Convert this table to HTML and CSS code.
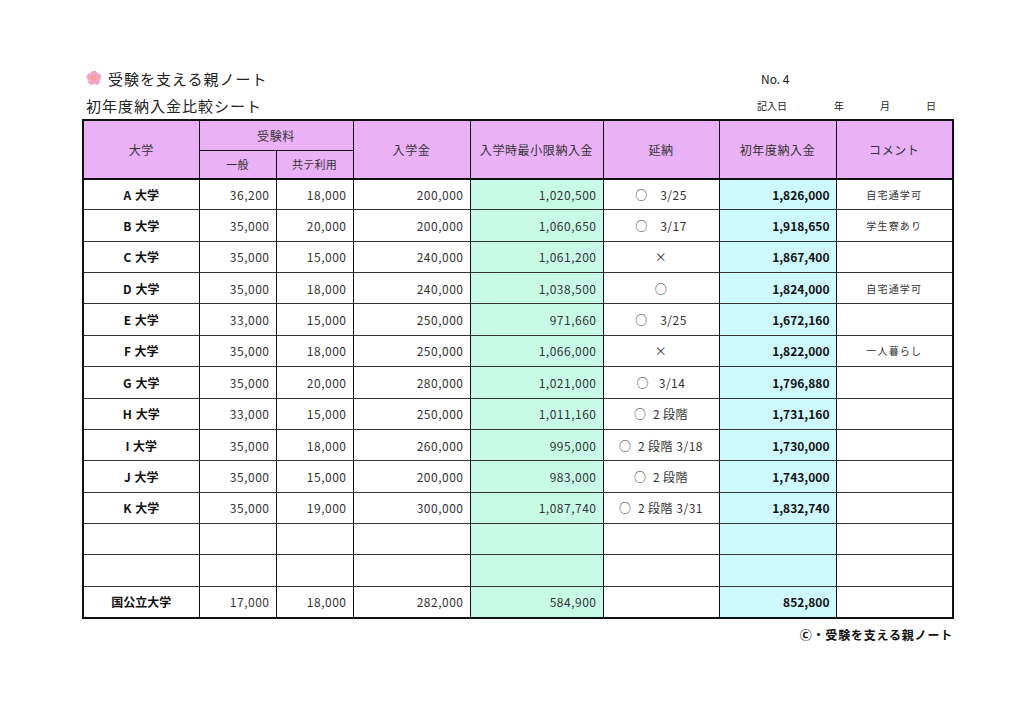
FILE: index.html
```html
<!DOCTYPE html>
<html lang="ja">
<head>
<meta charset="utf-8">
<link rel="stylesheet" href="styles.css">
</head>
<body>
<div class="page">
  <div class="top">
    <div class="brand">
      <svg class="flower" viewBox="0 0 20 20" width="16" height="16">
        <g fill="#f5a3c7">
          <circle cx="10" cy="5" r="4.2"/>
          <circle cx="14.8" cy="8.5" r="4.2"/>
          <circle cx="13" cy="14.2" r="4.2"/>
          <circle cx="7" cy="14.2" r="4.2"/>
          <circle cx="5.2" cy="8.5" r="4.2"/>
        </g>
        <circle cx="10" cy="10" r="3" fill="#f08aa8"/>
        <circle cx="10" cy="10" r="1.8" fill="#f6c14a"/>
      </svg>
      <span>受験を支える親ノート</span>
    </div>
    <div class="no">No. 4</div>
  </div>
  <div class="sub">
    <div class="subtitle">初年度納入金比較シート</div>
    <div class="date">
      <span class="d1">記入日</span><span class="d2">年</span><span class="d3">月</span><span class="d4">日</span>
    </div>
  </div>
  <table class="grid">
    <colgroup>
      <col class="c116"><col class="c77"><col class="c77"><col class="c117"><col class="c133"><col class="c116"><col class="c117"><col class="c117">
    </colgroup>
    <thead>
      <tr class="h1">
        <th rowspan="2">大学</th>
        <th colspan="2" class="fee">受験料</th>
        <th rowspan="2">入学金</th>
        <th rowspan="2">入学時最小限納入金</th>
        <th rowspan="2">延納</th>
        <th rowspan="2">初年度納入金</th>
        <th rowspan="2">コメント</th>
      </tr>
      <tr class="h2">
        <th class="small">一般</th>
        <th class="small">共テ利用</th>
      </tr>
    </thead>
    <tbody>
      <tr><td class="u">A 大学</td><td class="n">36,200</td><td class="n">18,000</td><td class="n">200,000</td><td class="n g">1,020,500</td><td class="e">○&emsp;3/25</td><td class="n b c">1,826,000</td><td class="m">自宅通学可</td></tr>
      <tr><td class="u">B 大学</td><td class="n">35,000</td><td class="n">20,000</td><td class="n">200,000</td><td class="n g">1,060,650</td><td class="e">○&emsp;3/17</td><td class="n b c">1,918,650</td><td class="m">学生寮あり</td></tr>
      <tr><td class="u">C 大学</td><td class="n">35,000</td><td class="n">15,000</td><td class="n">240,000</td><td class="n g">1,061,200</td><td class="e">×</td><td class="n b c">1,867,400</td><td class="m"></td></tr>
      <tr><td class="u">D 大学</td><td class="n">35,000</td><td class="n">18,000</td><td class="n">240,000</td><td class="n g">1,038,500</td><td class="e">○</td><td class="n b c">1,824,000</td><td class="m">自宅通学可</td></tr>
      <tr><td class="u">E 大学</td><td class="n">33,000</td><td class="n">15,000</td><td class="n">250,000</td><td class="n g">971,660</td><td class="e">○&emsp;3/25</td><td class="n b c">1,672,160</td><td class="m"></td></tr>
      <tr><td class="u">F 大学</td><td class="n">35,000</td><td class="n">18,000</td><td class="n">250,000</td><td class="n g">1,066,000</td><td class="e">×</td><td class="n b c">1,822,000</td><td class="m">一人暮らし</td></tr>
      <tr><td class="u">G 大学</td><td class="n">35,000</td><td class="n">20,000</td><td class="n">280,000</td><td class="n g">1,021,000</td><td class="e">○&ensp;&nbsp;3/14</td><td class="n b c">1,796,880</td><td class="m"></td></tr>
      <tr><td class="u">H 大学</td><td class="n">33,000</td><td class="n">15,000</td><td class="n">250,000</td><td class="n g">1,011,160</td><td class="e">○&ensp;2&thinsp;段階</td><td class="n b c">1,731,160</td><td class="m"></td></tr>
      <tr><td class="u">I 大学</td><td class="n">35,000</td><td class="n">18,000</td><td class="n">260,000</td><td class="n g">995,000</td><td class="e">○&ensp;2&thinsp;段階&nbsp;3/18</td><td class="n b c">1,730,000</td><td class="m"></td></tr>
      <tr><td class="u">J 大学</td><td class="n">35,000</td><td class="n">15,000</td><td class="n">200,000</td><td class="n g">983,000</td><td class="e">○&ensp;2&thinsp;段階</td><td class="n b c">1,743,000</td><td class="m"></td></tr>
      <tr><td class="u">K 大学</td><td class="n">35,000</td><td class="n">19,000</td><td class="n">300,000</td><td class="n g">1,087,740</td><td class="e">○&ensp;2&thinsp;段階&nbsp;3/31</td><td class="n b c">1,832,740</td><td class="m"></td></tr>
      <tr><td class="u"></td><td class="n"></td><td class="n"></td><td class="n"></td><td class="n g"></td><td class="e"></td><td class="n b c"></td><td class="m"></td></tr>
      <tr><td class="u"></td><td class="n"></td><td class="n"></td><td class="n"></td><td class="n g"></td><td class="e"></td><td class="n b c"></td><td class="m"></td></tr>
      <tr class="last"><td class="u">国公立大学</td><td class="n">17,000</td><td class="n">18,000</td><td class="n">282,000</td><td class="n g">584,900</td><td class="e"></td><td class="n b c">852,800</td><td class="m"></td></tr>
    </tbody>
  </table>
  <div class="footer">Ⓒ・受験を支える親ノート</div>
</div>
</body>
</html>
```

FILE: styles.css
```css
* { box-sizing: border-box; }
html, body { margin: 0; padding: 0; background: #fff; }
body {
  font-family: "Noto Sans CJK JP", "Noto Sans", sans-serif;
  color: #222;
}
.page {
  width: 1024px;
  height: 724px;
  padding: 65px 0 0 82px;
}
.top {
  display: flex;
  align-items: center;
  height: 26px;
  width: 870px;
}
.brand {
  display: flex;
  align-items: center;
  font-size: 15px;
  letter-spacing: 1px;
  gap: 6px;
  padding-left: 4px;
  width: 679px;
}
.flower { display: block; }
.no {
  font-size: 12px;
}
.sub {
  display: flex;
  align-items: center;
  height: 28px;
  width: 870px;
}
.subtitle {
  font-size: 15px;
  letter-spacing: 1px;
  padding-left: 4px;
  width: 675px;
}
.date {
  display: flex;
  font-size: 10px;
}
.d1 { width: 77px; }
.d2 { width: 46px; }
.d3 { width: 46px; }
.d4 { width: 20px; }

.grid {
  border-collapse: collapse;
  table-layout: fixed;
  width: 871px;
  border: 2px solid #111;
  font-size: 12px;
}
.c116 { width: 116px; }
.c117 { width: 117px; }
.c77 { width: 77px; }
.c133 { width: 133px; }
.grid th, .grid td {
  border: 1px solid #333;
  padding: 0;
}
.grid th {
  background: #eab1f6;
  font-weight: normal;
  border-color: #111;
  border-width: 1.5px;
  text-align: center;
  letter-spacing: 0.6px;
  color: #333;
}
.h1 th { height: 30px; }
.h2 th { height: 28.5px; }
.grid th.small { font-size: 11px; letter-spacing: 0.3px; }
.grid thead tr:first-child th { border-top-width: 2px; }
.grid td {
  height: 31.36px;
  border-left: 1.5px solid #111;
  border-right: 1.5px solid #111;
  color: #333;
}
.grid tbody tr:first-child td { border-top: 2px solid #111; }
.grid td.u { text-align: center; font-weight: bold; color: #111; word-spacing: 1px; }
.grid td.n { text-align: right; padding-right: 6px; letter-spacing: 0.5px; }
.grid td.g { background: #c7fbe8; }
.grid td.c { background: #cdf8fe; }
.grid td.b { font-weight: bold; letter-spacing: 0; color: #111; }
.grid td.e { text-align: center; letter-spacing: 0.5px; }
.grid td.m { text-align: center; font-size: 10px; letter-spacing: 1.2px; }
.grid tr.last td { border-top: 1.5px solid #111; }
.footer {
  width: 871px;
  text-align: right;
  font-size: 12px;
  letter-spacing: 0.8px;
  font-weight: bold;
  margin-top: 7px;
  color: #111;
}
```
